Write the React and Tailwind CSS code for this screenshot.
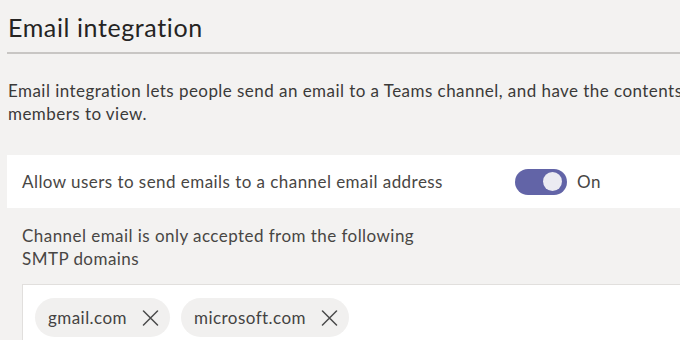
import React from 'react'

function CloseIcon() {
  return (
    <svg width="17" height="16" viewBox="0 0 17 16" fill="none" className="shrink-0">
      <path d="M1.5 1 L15.5 15 M15.5 1 L1.5 15" stroke="#4a4a4a" strokeWidth="1.5" strokeLinecap="round" />
    </svg>
  )
}

function DomainChip({ label }) {
  return (
    <div className="flex h-[39px] items-center gap-[15px] rounded-full bg-[#f1f0ef] pl-[13px] pr-[11px]">
      <span className="text-[17px] leading-none tracking-[0.45px] text-[#444342]">{label}</span>
      <CloseIcon />
    </div>
  )
}

function Toggle({ on }) {
  return (
    <div className="flex items-center gap-[10px]">
      <div className="flex h-[26px] w-[52px] items-center justify-end rounded-full bg-[#6264a7] pr-[5px]">
        <div className="size-[19px] rounded-full bg-[#ebebf2]" />
      </div>
      <span className="text-[17px] tracking-[0.45px] text-[#484644]">{on ? 'On' : 'Off'}</span>
    </div>
  )
}

export default function App() {
  const domains = ['gmail.com', 'microsoft.com']

  return (
    <div className="h-[340px] w-[680px] overflow-hidden bg-[#f3f2f1] font-['Lato','Liberation_Sans',sans-serif]">
      <div className="w-[960px] pt-[12px]">
        <h2 className="pl-[8px] text-[25px] leading-[30px] tracking-[0.6px] text-[#252423]">Email integration</h2>
        <div className="ml-[7px] mt-[10px] h-[2px] bg-[#c8c6c4]" />

        <p className="mt-[25px] pl-[8px] text-[17px] leading-[23px] tracking-[0.45px] text-[#3b3a39]">
          <span className="whitespace-nowrap">
            Email integration lets people send an email to a Teams channel, and have the contents of the email displayed in conversations for all channel
          </span>
          <br />
          members to view.
        </p>

        <div className="ml-[7px] mt-[30px] flex h-[53px] items-center bg-white pl-[15px]">
          <span className="w-[493px] text-[17px] tracking-[0.45px] text-[#484644]">
            Allow users to send emails to a channel email address
          </span>
          <Toggle on />
        </div>

        <p className="mt-[16px] w-[440px] pl-[22px] text-[17px] leading-[23px] tracking-[0.45px] text-[#484644]">
          Channel email is only accepted from the following
          <br />
          SMTP domains
        </p>

        <div className="ml-[22px] mt-[14px] flex h-[80px] items-start gap-[11px] border border-[#e1dfdd] bg-white pl-[12px] pt-[13px]">
          {domains.map((d) => (
            <DomainChip key={d} label={d} />
          ))}
        </div>
      </div>
    </div>
  )
}
